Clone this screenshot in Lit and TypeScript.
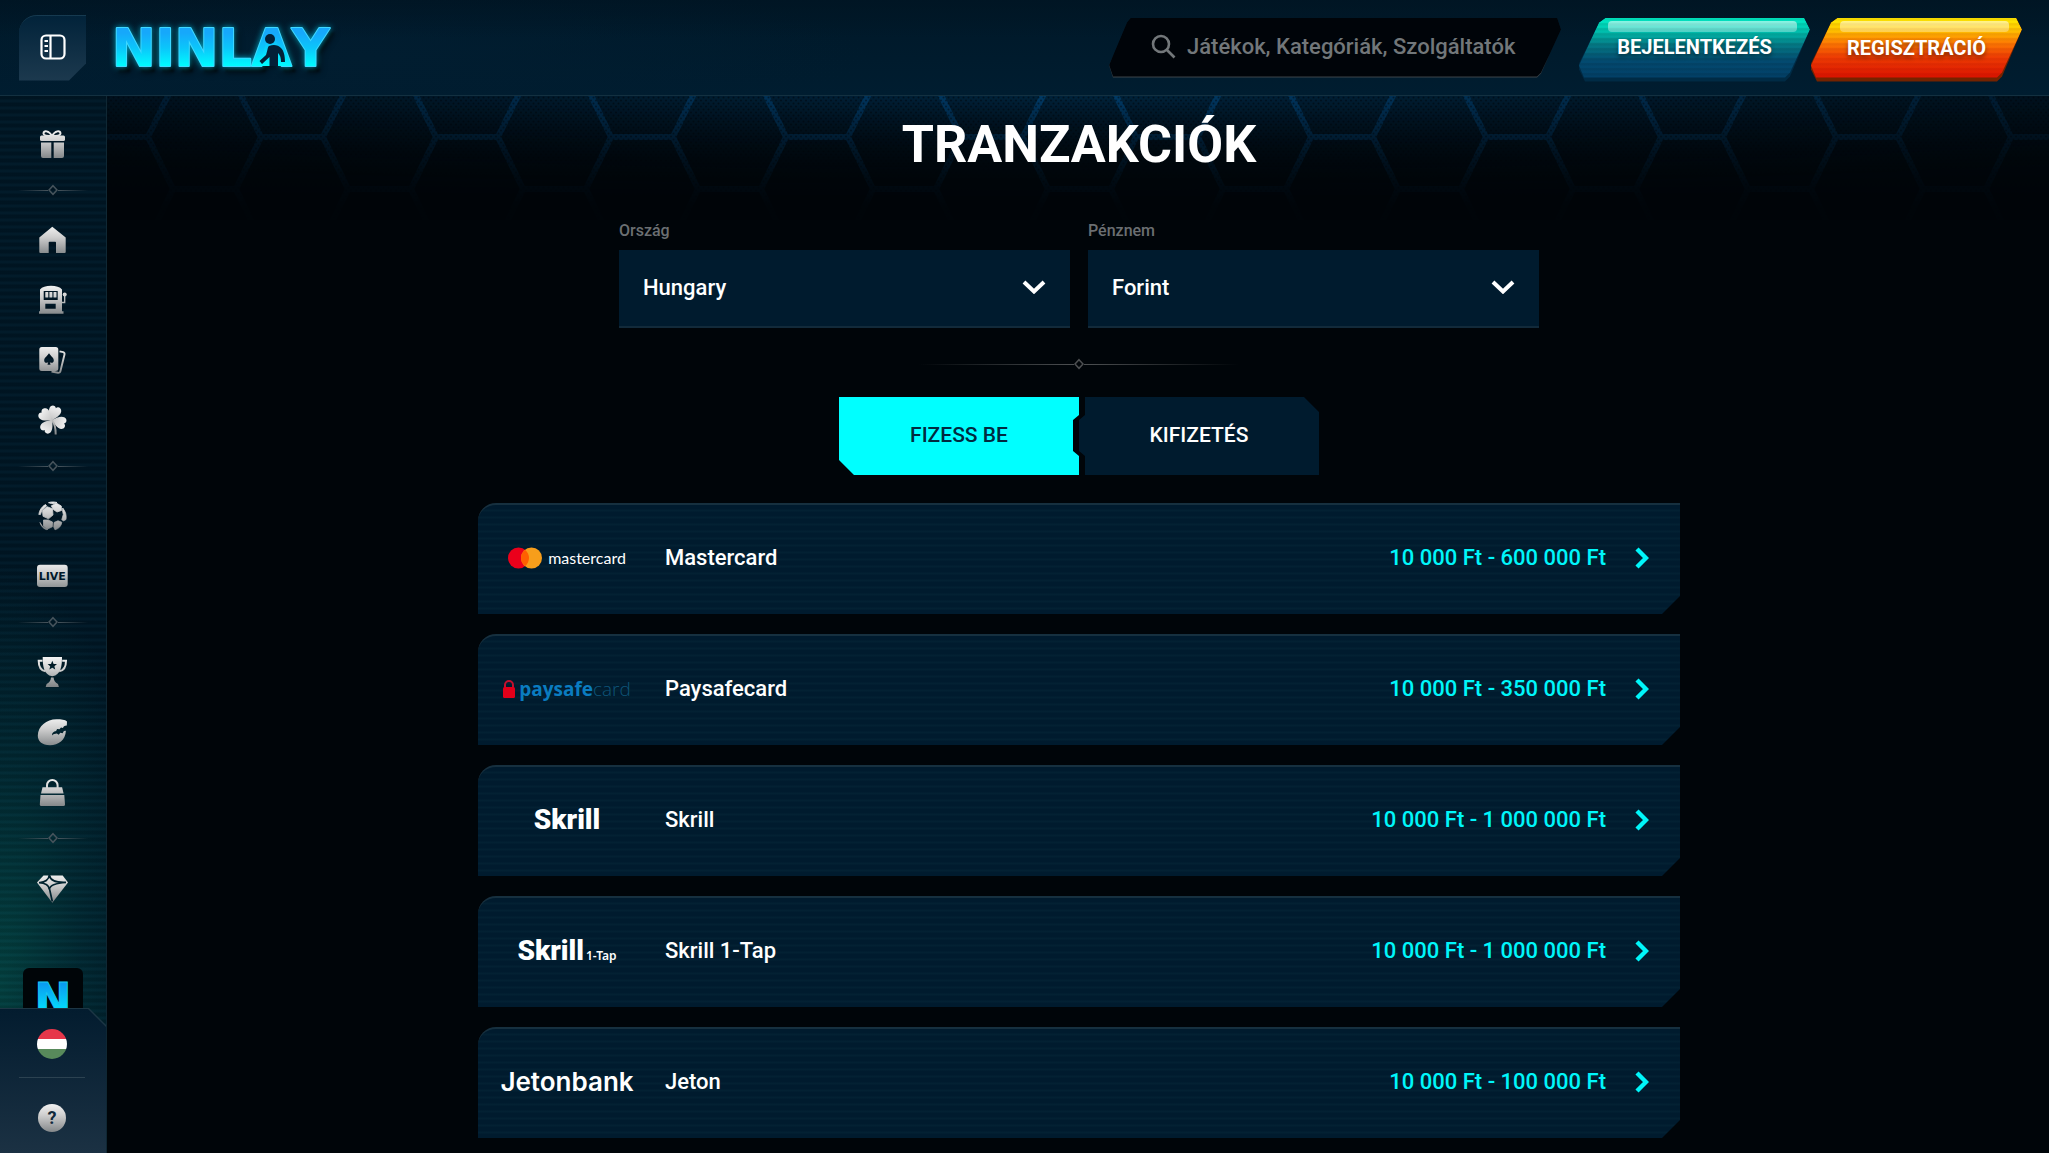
import { LitElement, html, css, svg, nothing } from "lit";
import type { TemplateResult } from "lit";
import { customElement, state } from "lit/decorators.js";
import { classMap } from "lit/directives/class-map.js";

type Shape = TemplateResult<2>;

interface NavItem {
  label: string;
  icon: Shape;
}

interface Method {
  name: string;
  amount: string;
  logo: TemplateResult;
}

const gift = svg`
  <path d="M15 7C12 1.500 6.500 1 6.500 4.500c0 2 3 2.500 8.500 2.500 5.500 0 8.500-.500 8.500-2.500C23.500 1 18 1.500 15 7z" fill="none" stroke="url(#metal)" stroke-width="2"/>
  <rect x="3" y="6.500" width="25" height="5.500" rx="1.500"/>
  <path d="M4 13.500h10.300V29H6a2 2 0 0 1-2-2zM16.700 13.500H27V27a2 2 0 0 1-2 2h-8.300z"/>`;

const home = svg`<path d="M15.300 1.700 28.700 12.500V27a1 1 0 0 1-1 1H19V17.500a.8.8 0 0 0-.8-.8h-5.700a.8.8 0 0 0-.8.8V28H3.300a1 1 0 0 1-1-1V12.500z"/>`;

const slots = svg`
  <path fill-rule="evenodd" d="M3 26.300V4.500C5 2 9 .800 14 .800s9 1.200 11 3.700v21.800h1.500v2.400H2v-2.400zM6.700 6v9h14V6zM8.300 18.700v5h10.400v-5z"/>
  <rect x="8.300" y="7" width="3" height="5.500" rx=".5"/><rect x="12.400" y="7" width="3" height="5.500" rx=".5"/><rect x="16.500" y="7" width="3" height="5.500" rx=".5"/>
  <circle cx="27.700" cy="9.500" r="2"/>
  <path d="M27.700 10v7.500h-3" fill="none" stroke="url(#metal)" stroke-width="1.300"/>`;

const cards = svg`
  <path fill-rule="evenodd" d="M4.800 2h14a2.500 2.500 0 0 1 2.500 2.500v19a2.500 2.500 0 0 1-2.500 2.500h-14a2.500 2.500 0 0 1-2.500-2.500v-19A2.500 2.500 0 0 1 4.800 2zM12 8.300c-2 3-4.800 4.500-4.800 7.200 0 2.500 2.700 3 4 1.500l-.7 2.800h3l-.7-2.800c1.300 1.500 4 1 4-1.500 0-2.700-2.800-4.200-4.800-7.200z"/>
  <path d="M22.500 6.300l3.700.9a1.800 1.800 0 0 1 1.300 2.200L23.400 26.300a2 2 0 0 1-2.400 1.500L14.500 26.500" fill="none" stroke="url(#metal)" stroke-width="1.900"/>`;

const clover = svg`
  ${[18, 106, 216, -54].map(
    (a) => svg`<path transform="rotate(${a} 15 15)" d="M15 15.500C12 11.500 8.300 8 8.900 4 9.500.5 13.800-.3 15 2.600 16.200-.3 20.500.5 21.100 4 21.700 8 18 11.500 15 15.500z"/>`
  )}
  <path d="M15.500 16c2.500 3.500 3.300 7 3.200 13.500" fill="none" stroke="url(#metal)" stroke-width="2"/>`;

const ball = svg`
  <g stroke="url(#metal)" stroke-width=".8" stroke-linejoin="round">
    <path d="M5.500 9.500 10 5.700 15.500 7.800 16 14 11.500 17.800 6 15.300z"/>
    <path d="M14.300 4.800 19.500 2.200 24.300 5 24.500 9.500 20 11 16.300 8.500z"/>
    <path d="M6.500 19 11 19 15.500 21 15.300 25.800 10.500 28 6.500 25.300z"/>
    <path d="M17 21.500 21 19.800 24.800 21.300C24.300 25 22 27.500 18 28.800L16.800 26z"/>
    <path d="M25.700 7C28.700 10.500 29.600 14.500 29 18.500L26.300 20 24.800 18.500 26.300 13.500 25.600 10z"/>
    <path d="M11.500 1.700C14 .7 17 .700 20 1.500L18.500 2.300 14.500 2.600z"/>
    <path d="M8.500 3.500 9.500 5 5 8.900 3.500 13.500H1.800C2.300 9.500 4.500 5.700 8.500 3.500zM3 21.500l2.700 4.300 5 2.600-1.500.2C6 27.300 4 25 3 21.500z"/>
  </g>`;

const live = svg`
  <rect x="0" y="3.700" width="30.700" height="22.300" rx="3"/>
  <text class="live" x="15.300" y="18.600" text-anchor="middle">LIVE</text>`;

const trophy = svg`
  <path fill-rule="evenodd" d="M5.700 0h19.300c0 8-.7 18-9.700 19.300C6.400 18 5.700 8 5.700 0zM15.300 3.700l-1.300 3.200-3.400.2 2.600 2.200-.8 3.300 2.900-1.800 2.900 1.800-.8-3.300 2.600-2.200-3.400-.2z"/>
  <path d="M5.500 3.700H1.700C1.700 9 3.500 13.500 8.500 14.300M25.200 3.700H29c0 5.300-1.800 9.800-6.800 10.600" fill="none" stroke="url(#metal)" stroke-width="2"/>
  <path d="M14 20.500h2.600c.2 3 1.400 5 4.400 6.500l.9 2.900H8.700l.9-2.900c3-1.500 4.200-3.500 4.400-6.500z"/>`;

const glove = svg`
  <path d="M29.800 8.500c-2.600.3-3.300 1-3.800 2.400l-2-.4-1.500 1.800-2.400-.3-1 2.100c-2.500.4-4.300 1.900-4.100 4.300 1.300-1.200 3-1.900 4.900-1.900l1.800 1.200 1.600-2 2.300.6 1.300-2.400 2-.2c-.4 9.300-7.400 14.500-15.900 14.500C4.800 28.200.7 24 .8 18.500 1 9.500 9.500 2.300 19.500 2.300c5 0 8.500.4 10.500 2.200z"/>`;

const lock = svg`
  <path d="M10 12V8.200a5.300 5.300 0 0 1 10.600 0V12" fill="none" stroke="url(#metal)" stroke-width="2"/>
  <path d="M5.500 10.300h19.600l1.500 6.300H4zM3.500 18h23.800l.7 9.500a1.500 1.500 0 0 1-1.500 1.500H4.300a1.500 1.500 0 0 1-1.500-1.500z"/>`;

const diamond = svg`
  <path d="M6.500 2.500h19.200L31 9.500 15.300 29.700 0 9.500z"/>
  <path d="M2 9.500C8 9.800 12 6.500 12.300 2M12.300 2C13 6.500 18 9.800 29 9.300M12.300 16.500C12 12.500 8 10 2 9.700M12.300 16.500C13 12.300 18 10 29 9.500M12.300 15 15.300 28.500" fill="none" stroke="#00222e" stroke-width="1.700"/>`;

const NAV: NavItem[][] = [
  [{ label: "Bónuszok", icon: gift }],
  [
    { label: "Kezdőlap", icon: home },
    { label: "Nyerőgépek", icon: slots },
    { label: "Kártyajátékok", icon: cards },
    { label: "Szerencsejátékok", icon: clover },
  ],
  [
    { label: "Sport", icon: ball },
    { label: "Élő", icon: live },
  ],
  [
    { label: "Versenyek", icon: trophy },
    { label: "Kihívások", icon: glove },
    { label: "Bolt", icon: lock },
  ],
  [{ label: "VIP", icon: diamond }],
];

const METHODS: Method[] = [
  {
    name: "Mastercard",
    amount: "10 000 Ft - 600 000 Ft",
    logo: html`<span class="brand mc">
      <svg width="34" height="22" viewBox="0 0 34 22">
        <circle cx="10.500" cy="11" r="10.500" fill="#eb001b" />
        <circle cx="23.500" cy="11" r="10.500" fill="#f79e1b" />
        <path d="M17 2.750a10.500 10.500 0 0 1 0 16.500 10.500 10.500 0 0 1 0-16.500z" fill="#ff5f00" />
      </svg>
      mastercard</span>`,
  },
  {
    name: "Paysafecard",
    amount: "10 000 Ft - 350 000 Ft",
    logo: html`<span class="brand psc">
      <svg width="12" height="18" viewBox="0 0 12 18">
        <path d="M2 7.500V5a4 4 0 0 1 8 0v2.500" fill="none" stroke="#c4102e" stroke-width="2" />
        <rect y="7" width="12" height="11" rx="1.500" fill="#e2001a" />
      </svg>
      <span><b>paysafe</b>card</span></span>`,
  },
  {
    name: "Skrill",
    amount: "10 000 Ft - 1 000 000 Ft",
    logo: html`<span class="brand skrill">Skrill</span>`,
  },
  {
    name: "Skrill 1-Tap",
    amount: "10 000 Ft - 1 000 000 Ft",
    logo: html`<span class="brand skrill">Skrill<small>1-Tap</small></span>`,
  },
  {
    name: "Jeton",
    amount: "10 000 Ft - 100 000 Ft",
    logo: html`<span class="brand jeton">Jetonbank</span>`,
  },
];

const chevronDown = html`<svg class="chev" width="24" height="14" viewBox="0 0 24 14" aria-hidden="true">
  <path d="M2 2l10 9.500L22 2" fill="none" stroke="#fff" stroke-width="4" />
</svg>`;

@customElement("nl-divider")
class NlDivider extends LitElement {
  static styles = css`
    :host {
      display: flex;
      align-items: center;
      height: 12px;
      color: #47545c;
    }
    .line {
      flex: 1;
      height: 1px;
      background: linear-gradient(90deg, transparent, currentColor);
    }
    .line.end {
      background: linear-gradient(270deg, transparent, currentColor);
    }
  `;
  render() {
    return html`<span class="line"></span>
      <svg width="10" height="12" viewBox="0 0 10 12">
        <path d="M5 1.700 9 6l-4 4.300L1 6z" fill="none" stroke="currentColor" stroke-width="1.500" />
      </svg>
      <span class="line end"></span>`;
  }
}

@customElement("nl-sidebar")
class NlSidebar extends LitElement {
  static styles = css`
    :host {
      box-sizing: border-box;
      display: flex;
      flex-direction: column;
      width: 107px;
      border-right: 1px solid #0f2733;
      background:
        repeating-linear-gradient(180deg, rgba(0, 0, 0, 0.08) 0 3px, rgba(40, 120, 150, 0.05) 4px 6px, rgba(0, 0, 0, 0.08) 7px),
        radial-gradient(160px 420px at 0 84%, #03403f, rgba(2, 52, 58, 0.6) 50%, transparent),
        #001624;
    }
    nav {
      flex: 1;
      min-height: 0;
      overflow: hidden;
      padding: 18px 18px 0;
    }
    ul {
      list-style: none;
      margin: 0;
      padding: 0;
    }
    .item {
      display: grid;
      place-items: center;
      height: 60px;
      width: 68px;
    }
    .item svg,
    .help svg {
      overflow: visible;
      fill: url(#metal);
    }
    .live {
      font: 900 11px "DejaVu Sans", sans-serif;
      fill: #00182a;
    }
    nl-divider {
      margin: 10px 0 14px;
    }
    .badge {
      display: grid;
      place-items: center;
      width: 60px;
      height: 60px;
      margin: 50px auto 0;
      border-radius: 6px;
      background: #000508;
    }
    .badge text {
      font: 700 44px "DejaVu Sans", sans-serif;
    }
    footer {
      background: #1d3644;
      clip-path: polygon(0 0, 89px 0, 107px 18px, 107px 100%, 0 100%);
    }
    .pane {
      display: flex;
      flex-direction: column;
      align-items: center;
      padding: 20px 2px 20px 0;
      margin-top: 1px;
      background: linear-gradient(180deg, #031c2f, #1b3143);
      clip-path: polygon(0 0, 88px 0, 106px 18px, 106px 100%, 0 100%);
    }
    .flag,
    .help {
      display: block;
      padding: 0;
      border: 0;
      background: none;
      height: 30px;
      width: 30px;
      cursor: pointer;
    }
    .pane hr {
      width: 66px;
      height: 1px;
      margin: 18px 0 25px;
      border: 0;
      background: #2c4251;
    }
    .q {
      font: 700 18px "Roboto", sans-serif;
      fill: #10293c;
    }
  `;

  private metal() {
    return svg`<defs><linearGradient id="metal" gradientUnits="userSpaceOnUse" x1="0" y1="0" x2="0" y2="30">
      <stop offset="0" stop-color="#f4f4f4"/><stop offset=".4" stop-color="#cfcfcf"/><stop offset="1" stop-color="#808486"/>
    </linearGradient></defs>`;
  }

  render() {
    return html`
      <nav aria-label="Menü">
        ${NAV.map(
          (group, i) => html`
            ${i ? html`<nl-divider></nl-divider>` : nothing}
            <ul>
              ${group.map(
                (n) => html`<li>
                  <a class="item" href="#" aria-label=${n.label}>
                    <svg width="30" height="30" viewBox="0 0 30 30">${this.metal()}${n.icon}</svg>
                  </a>
                </li>`
              )}
            </ul>
          `
        )}
        <a class="badge" href="#" aria-label="Alkalmazás">
          <svg width="60" height="60" viewBox="0 0 60 60">
            <defs>
              <linearGradient id="neon" x1="0" y1="0" x2="0" y2="1">
                <stop offset=".2" stop-color="#0a9cf0" /><stop offset=".85" stop-color="#00f0ff" />
              </linearGradient>
            </defs>
            <text x="30" y="47" text-anchor="middle" fill="url(#neon)" stroke="#19c8f5" stroke-width="1">N</text>
          </svg>
        </a>
      </nav>
      <footer>
        <div class="pane">
          <button class="flag" aria-label="Magyar">
            <svg width="30" height="30" viewBox="0 0 30 30">
              <clipPath id="round"><circle cx="15" cy="15" r="15" /></clipPath>
              <g clip-path="url(#round)">
                <rect width="30" height="10" fill="#e6364a" /><rect y="10" width="30" height="10" fill="#fff" /><rect y="20" width="30" height="10" fill="#588a5b" />
              </g>
            </svg>
          </button>
          <hr />
          <button class="help" aria-label="Segítség">
            <svg width="30" height="30" viewBox="0 0 30 30">
              ${this.metal()}<circle cx="15" cy="15" r="14" />
              <text class="q" x="15" y="21" text-anchor="middle">?</text>
            </svg>
          </button>
        </div>
      </footer>
    `;
  }
}

@customElement("nl-header")
class NlHeader extends LitElement {
  static styles = css`
    :host {
      box-sizing: border-box;
      display: flex;
      align-items: center;
      justify-content: space-between;
      height: 96px;
      padding: 0 27px 0 19px;
      border-bottom: 1px solid #133040;
      background:
        linear-gradient(180deg, rgba(0, 20, 34, 0.7), transparent 40%),
        radial-gradient(500px 90px at 18% 60%, #011d30, transparent),
        linear-gradient(180deg, #001828, #001d30);
      font-family: "Roboto", sans-serif;
    }
    .start,
    .end {
      display: flex;
      align-items: center;
    }
    .start {
      gap: 18px;
    }
    .menu {
      display: grid;
      place-items: center;
      width: 67px;
      height: 66px;
      padding: 0 0 2px;
      border: 0;
      border-top: 1px solid #163a50;
      border-radius: 18px 0 0 0;
      background: linear-gradient(180deg, #02233a, #1c394e);
      clip-path: polygon(0 0, 100% 0, 100% calc(100% - 17px), calc(100% - 17px) 100%, 0 100%);
      cursor: pointer;
    }
    .logo {
      display: block;
      height: 66px;
    }
    .logo svg {
      overflow: visible;
    }
    .logo text {
      font: 700 52px "DejaVu Sans", sans-serif;
      font-kerning: none;
      filter: drop-shadow(0 0 3px #00a4c4) drop-shadow(3px 5px 1px #00060b);
    }
    .search {
      display: flex;
      width: 452px;
      height: 60px;
      background: linear-gradient(180deg, #04121c 60%, #3f464b);
      --cut: polygon(22px 0, calc(100% - 4px) 0, 100% 12px, calc(100% - 20px) calc(100% - 4px), calc(100% - 24px) 100%, 4px 100%, 0 calc(100% - 12px), 18px 5px);
      clip-path: var(--cut);
      margin-right: 18px;
    }
    .field {
      flex: 1;
      display: flex;
      align-items: center;
      gap: 11px;
      margin-bottom: 1px;
      padding: 0 24px 2px 42px;
      background: #000409;
      clip-path: var(--cut);
    }
    .field input {
      flex: 1;
      min-width: 0;
      padding: 0;
      border: 0;
      outline: 0;
      background: none;
      color: #fff;
      font: 500 22px "Roboto", sans-serif;
    }
    .field input::placeholder {
      color: #72777a;
      opacity: 1;
    }
    .cta {
      box-sizing: border-box;
      height: 64px;
      margin-top: 4px;
      padding: 0 0 4px;
      border: 0;
      background: #002b45;
      clip-path: polygon(27px 0, calc(100% - 6px) 0, 100% 12px, calc(100% - 20px) calc(100% - 5px), calc(100% - 25px) 100%, 6px 100%, 0 52px, 0 46px, 20px 5px);
      cursor: pointer;
    }
    .face {
      box-sizing: border-box;
      position: relative;
      display: flex;
      align-items: center;
      justify-content: center;
      height: 60px;
      padding: 0 36px 2px;
      background:
        repeating-linear-gradient(180deg, rgba(0, 0, 0, 0.08) 0 2px, transparent 3px 5px),
        linear-gradient(180deg, #00f0c8 0, #00c0ae 22%, #047a86 45%, #034a70 72%, #023f66 100%);
      clip-path: polygon(27px 0, calc(100% - 6px) 0, 100% 12px, calc(100% - 20px) calc(100% - 5px), calc(100% - 25px) 100%, 5px 100%, 0 48px, 20px 5px);
      color: #fff;
      font: 700 20px/24px "Roboto", sans-serif;
      text-shadow: 0 3px 4px rgba(0, 0, 0, 0.45);
    }
    .face::before {
      content: "";
      position: absolute;
      top: 3px;
      left: 29px;
      right: 13px;
      height: 11px;
      border-radius: 4px;
      background: linear-gradient(180deg, rgba(255, 255, 255, 0.55), rgba(255, 255, 255, 0.3));
    }
    .login {
      width: 231px;
      margin-right: 1px;
    }
    .join {
      width: 211px;
      background: #742300;
    }
    .join .face {
      padding-bottom: 0;
      background:
        repeating-linear-gradient(180deg, rgba(120, 0, 0, 0.08) 0 2px, transparent 3px 5px),
        linear-gradient(180deg, #ffee00 0, #ffc400 20%, #fd7a02 42%, #ee3d03 65%, #d91200 100%);
    }
  `;
  render() {
    return html`
      <div class="start">
        <button class="menu" aria-label="Menü">
          <svg width="26" height="26" viewBox="0 0 26 26" fill="none" stroke="#fff" stroke-width="2.200">
            <rect x="1.500" y="1.500" width="23" height="23" rx="4.500" />
            <path d="M10.500 2v22M4.500 7h3.500M4.500 12h3.500M4.500 17h3.500" />
          </svg>
        </button>
        <a class="logo" href="#" aria-label="Ninlay">
          <svg width="232" height="66" viewBox="0 0 232 66">
            <defs>
              <linearGradient id="neon" x1="0" y1="0" x2="0" y2="1">
                <stop offset=".25" stop-color="#16a8fb" /><stop offset=".5" stop-color="#0bc6fa" /><stop offset=".8" stop-color="#00fbff" />
              </linearGradient>
              <linearGradient id="fill" x1="0" y1="0" x2="0" y2="1">
                <stop offset="0" stop-color="#10b8fa" /><stop offset="1" stop-color="#00fbff" />
              </linearGradient>
            </defs>
            <text x="8" y="51" fill="url(#neon)" stroke="#3fd8ff" stroke-width="2" stroke-linejoin="round" paint-order="stroke">NINLAY</text>
            <path d="M155 51 164 22h7L181 51z" fill="url(#fill)" />
            <g fill="#032037">
              <circle cx="166" cy="24" r="5" />
              <path d="M165 31c5-2 9-1 12 2 3 3 4 8 4 14h-4c0-4-.8-7-3-9v13h-8.500V42l-7.500 7-2.500-3 6.500-6c1.500-4 1.500-8 3-9z" />
            </g>
          </svg>
        </a>
      </div>
      <div class="end">
        <label class="search">
          <span class="field">
            <svg width="25" height="25" viewBox="0 0 25 25" fill="none" stroke="#72777a" stroke-width="2.600" aria-hidden="true">
              <circle cx="10" cy="10" r="8" /><path d="M15.500 15.500l8 8" />
            </svg>
            <input type="search" aria-label="Keresés" placeholder="Játékok, Kategóriák, Szolgáltatók" />
          </span>
        </label>
        <button class="cta login"><span class="face">BEJELENTKEZÉS</span></button>
        <button class="cta join"><span class="face">REGISZTRÁCIÓ</span></button>
      </div>
    `;
  }
}

@customElement("app-root")
export class AppRoot extends LitElement {
  static styles = css`
    :host {
      display: grid;
      grid-template: auto 1fr / auto 1fr;
      min-height: 100vh;
      background: #000509;
      color: #fff;
      font-family: "Roboto", sans-serif;
    }
    nl-header {
      grid-column: 1 / -1;
      position: sticky;
      top: 0;
      z-index: 2;
    }
    nl-sidebar {
      position: sticky;
      top: 96px;
      height: calc(100vh - 96px);
    }
    main {
      position: relative;
      display: flex;
      flex-direction: column;
      align-items: center;
      min-width: 0;
      padding: 13px 24px 14px 26px;
    }
    .hex {
      position: absolute;
      inset: 0 0 auto;
      width: 100%;
      height: 124px;
    }
    h1 {
      position: relative;
      margin: 0 0 36px;
      font: 700 52px/72px "Roboto", sans-serif;
    }
    .filters {
      display: grid;
      grid-template-columns: 1fr 1fr;
      gap: 18px;
      width: 100%;
      max-width: 920px;
    }
    .filter label {
      display: block;
      margin-bottom: 5px;
      color: #6b6f72;
      font-size: 16px;
      font-weight: 500;
      line-height: 28px;
    }
    .pick {
      display: grid;
      align-items: center;
    }
    .pick > * {
      grid-area: 1 / 1;
    }
    select {
      box-sizing: border-box;
      width: 100%;
      height: 78px;
      padding: 0 24px 2px;
      border: 0;
      border-bottom: 2px solid #122a3a;
      border-radius: 0;
      appearance: none;
      background: #001b2e;
      color: #fff;
      font: 500 22px "Roboto", sans-serif;
    }
    .chev {
      justify-self: end;
      margin: 0 24px 4px 0;
      pointer-events: none;
    }
    nl-divider {
      width: 320px;
      margin: 30px 0 27px;
      color: #4d5052;
    }
    .tabs {
      display: flex;
      width: 480px;
      margin-bottom: 28px;
    }
    .tab {
      flex: 1;
      height: 78px;
      padding: 0 0 2px;
      border: 0;
      background: #001b2e;
      color: #fff;
      font: 500 21px "Roboto", sans-serif;
      cursor: pointer;
    }
    .tab:first-child {
      clip-path: polygon(0 0, 100% 0, 100% 18px, calc(100% - 6px) 23px, calc(100% - 6px) 54px, 100% 59px, 100% 100%, 15px 100%, 0 calc(100% - 15px));
    }
    .tab:last-child {
      clip-path: polygon(6px 0, calc(100% - 15px) 0, 100% 15px, 100% 100%, 6px 100%, 6px 59px, 0 54px, 0 23px, 6px 18px);
    }
    .tab.on {
      background: #00ffff;
      color: #012a40;
    }
    .methods {
      display: grid;
      gap: 20px;
      width: 100%;
      max-width: 1202px;
      margin: 0;
      padding: 0;
      list-style: none;
    }
    .row {
      box-sizing: border-box;
      display: flex;
      align-items: center;
      width: 100%;
      height: 111px;
      padding: 0 31px 4px 24px;
      border: 0 solid #16303f;
      border-top-width: 2px;
      border-radius: 18px 0 0 0;
      background: repeating-linear-gradient(180deg, #001b2e 0 4px, #032133 5px 6px, #001b2e 7px);
      clip-path: polygon(0 0, 100% 0, 100% calc(100% - 18px), calc(100% - 18px) 100%, 0 100%);
      color: #fff;
      font: 500 22px/28px "Roboto", sans-serif;
      text-align: left;
      cursor: pointer;
    }
    .slot {
      display: flex;
      justify-content: center;
      width: 130px;
      margin-right: 33px;
    }
    .name {
      flex: 1;
    }
    .sum {
      margin-right: 29px;
      color: #00f6fa;
    }
    .brand {
      display: flex;
      align-items: center;
      white-space: nowrap;
    }
    .mc {
      gap: 6px;
      font: 400 16px "Lato", sans-serif;
    }
    .psc {
      gap: 4px;
      color: #0e5578;
      font: 300 19px "Open Sans", sans-serif;
    }
    .psc b {
      color: #0a7cc0;
      font: 700 19px "Open Sans", sans-serif;
    }
    .skrill {
      align-items: baseline;
      font: 900 28px "Roboto", sans-serif;
    }
    .skrill small {
      margin-left: 2px;
      font: 600 12px "Noto Sans", sans-serif;
    }
    .jeton {
      font: 600 26px "Inter", sans-serif;
    }
  `;

  @state() private tab = 0;

  private renderHex() {
    return html`<svg class="hex" aria-hidden="true">
      <defs>
        <pattern id="cells" width="175" height="104" patternUnits="userSpaceOnUse" x="10">
          <path
            d="M-31 41H31L56 93H119L144 41H206M31 41 56-11M144 41 119-11M56 93 31 145M119 93 144 145"
            fill="none" stroke="#00457a" stroke-width="6" />
        </pattern>
        <pattern id="dots" width="5" height="6" patternUnits="userSpaceOnUse">
          <circle cx="1.500" cy="1.500" r="1" fill="#000307" /><circle cx="4" cy="4.500" r="1" fill="#000307" />
        </pattern>
        <linearGradient id="wash" x2="0" y2="1">
          <stop offset="0" stop-color="#00233c" /><stop offset=".8" stop-color="#000509" />
        </linearGradient>
        <radialGradient id="fade" cx=".5" cy="0" r=".62" gradientTransform="scale(1 1.500)">
          <stop offset="0" stop-color="#fff" /><stop offset=".5" stop-color="#aaa" /><stop offset="1" stop-color="#444" />
        </radialGradient>
        <linearGradient id="down" x2="0" y2="1">
          <stop offset="0" stop-color="#000" stop-opacity="0" /><stop offset=".9" stop-color="#000" stop-opacity=".95" />
        </linearGradient>
        <mask id="soft"><rect width="100%" height="100%" fill="url(#fade)" /><rect width="100%" height="100%" fill="url(#down)" /></mask>
      </defs>
      <g mask="url(#soft)">
        <rect width="100%" height="100%" fill="url(#wash)" />
        <rect width="100%" height="100%" fill="url(#cells)" opacity=".7" />
        <rect width="100%" height="100%" fill="url(#dots)" opacity=".5" />
      </g>
    </svg>`;
  }

  render() {
    return html`
      <nl-header></nl-header>
      <nl-sidebar></nl-sidebar>
      <main>
        ${this.renderHex()}
        <h1>TRANZAKCIÓK</h1>
        <div class="filters">
          <div class="filter">
            <label for="country">Ország</label>
            <div class="pick">
              <select id="country"><option>Hungary</option></select>
              ${chevronDown}
            </div>
          </div>
          <div class="filter">
            <label for="currency">Pénznem</label>
            <div class="pick">
              <select id="currency"><option>Forint</option></select>
              ${chevronDown}
            </div>
          </div>
        </div>
        <nl-divider></nl-divider>
        <div class="tabs" role="tablist">
          ${["FIZESS BE", "KIFIZETÉS"].map(
            (t, i) => html`<button
              role="tab"
              class=${classMap({ tab: true, on: this.tab === i })}
              aria-selected=${this.tab === i}
              @click=${() => (this.tab = i)}
            >${t}</button>`
          )}
        </div>
        <ul class="methods">
          ${METHODS.map(
            (m) => html`<li>
              <button class="row">
                <span class="slot">${m.logo}</span>
                <span class="name">${m.name}</span>
                <span class="sum">${m.amount}</span>
                <svg width="14" height="22" viewBox="0 0 14 22" aria-hidden="true">
                  <path d="M2 2l9 9-9 9" fill="none" stroke="#00f6fa" stroke-width="4.400" />
                </svg>
              </button>
            </li>`
          )}
        </ul>
      </main>
    `;
  }
}
